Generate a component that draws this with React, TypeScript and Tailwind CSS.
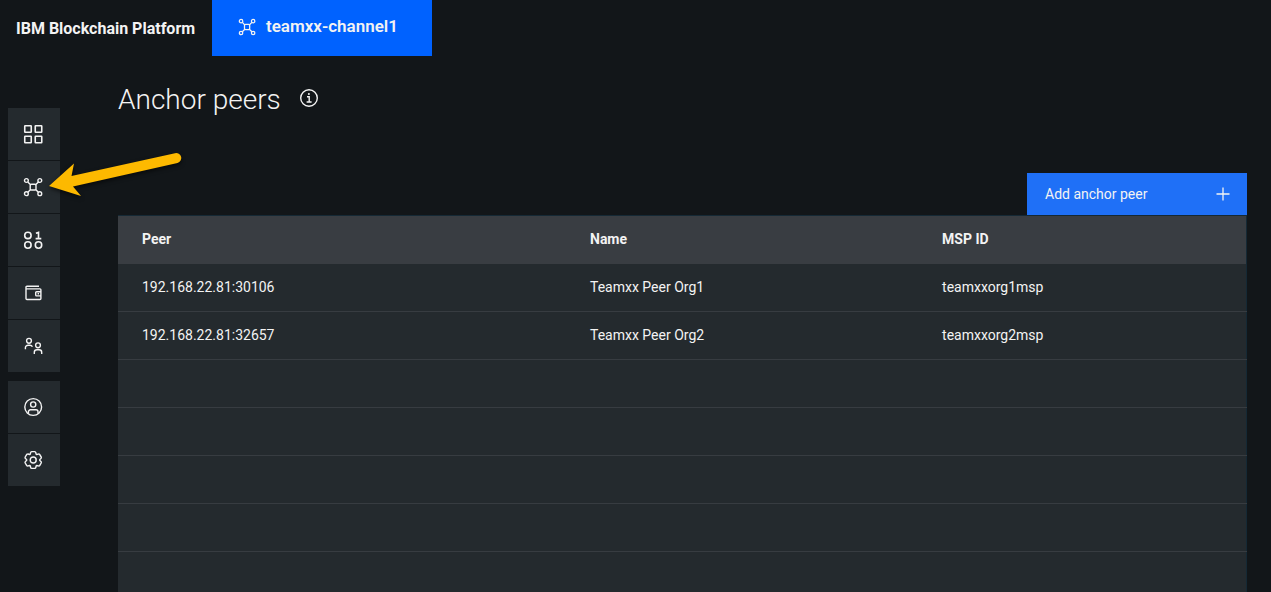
import type { ReactNode } from "react";

type IconProps = { className?: string };

function Icon({ className = "size-5", children }: IconProps & { children: ReactNode }) {
  return (
    <svg
      viewBox="0 0 20 20"
      fill="none"
      stroke="currentColor"
      strokeWidth="1.4"
      className={className}
      aria-hidden="true"
    >
      {children}
    </svg>
  );
}

function GridIcon() {
  return (
    <Icon>
      <g strokeWidth="1.6">
        <rect x="1.75" y="1.75" width="6.5" height="6.5" rx="0.4" />
        <rect x="12.25" y="1.75" width="6.5" height="6.5" rx="0.4" />
        <rect x="1.75" y="12.25" width="6.5" height="6.5" rx="0.4" />
        <rect x="12.25" y="12.25" width="6.5" height="6.5" rx="0.4" />
      </g>
    </Icon>
  );
}

function NodesIcon({ className }: IconProps) {
  return (
    <Icon className={className}>
      <circle cx="3.4" cy="3.5" r="1.9" />
      <circle cx="16.8" cy="3.5" r="1.9" />
      <circle cx="3.4" cy="16.7" r="1.9" />
      <circle cx="16.8" cy="16.7" r="1.9" />
      <rect x="7.2" y="7.2" width="5.8" height="5.8" rx="1.2" />
      <path d="M4.8 4.9 7.6 7.7M15.4 4.9 12.6 7.7M4.8 15.3 7.6 12.5M15.4 15.3 12.6 12.5" />
    </Icon>
  );
}

function BinaryIcon() {
  return (
    <Icon>
      <g strokeWidth="1.6">
        <circle cx="4.9" cy="5.4" r="3.2" />
        <circle cx="4.9" cy="15" r="3.2" />
        <circle cx="15.5" cy="15" r="3.2" />
        <path d="M12.9 3.3 15.5 2.4V8.6M12.6 8.6H18.3" />
      </g>
    </Icon>
  );
}

function WalletIcon() {
  return (
    <Icon>
      <path d="M16 3.2H3.9A.9.9 0 0 0 3 4.1V15.6a.9.9 0 0 0 .9.9H17a.9.9 0 0 0 .9-.9V6.8a.9.9 0 0 0-.9-.9H3" />
      <path d="M17.9 8.7H13.6a.9.9 0 0 0-.9.9V12a.9.9 0 0 0 .9.9H17.9" />
      <path d="M14.6 10.8H16" />
    </Icon>
  );
}

function PeopleIcon() {
  return (
    <Icon>
      <circle cx="6" cy="4.8" r="2.4" />
      <path d="M2.4 13.2V11.8A2.6 2.6 0 0 1 5 9.2H7A2.6 2.6 0 0 1 9.4 10.8" />
      <circle cx="15" cy="9.3" r="2.4" />
      <path d="M11.3 18V16.4A2.6 2.6 0 0 1 13.9 13.8H16.1A2.6 2.6 0 0 1 18.7 16.4V18" />
    </Icon>
  );
}

function UserIcon() {
  return (
    <Icon>
      <circle cx="10.2" cy="10" r="8.4" />
      <circle cx="10.2" cy="7.5" r="2.6" />
      <path d="M5.4 16.6V14.8A2 2 0 0 1 7.4 12.8H13A2 2 0 0 1 15 14.8V16.6" />
    </Icon>
  );
}

function GearIcon() {
  return (
    <Icon>
      <g transform="translate(0.6 0.4) scale(0.6)" strokeWidth="2.4">
        <path d="M27,16.76c0-.25,0-.5,0-.76s0-.51,0-.77l1.92-1.68A2,2,0,0,0,29.3,11L26.94,7a2,2,0,0,0-1.73-1,2,2,0,0,0-.64.1l-2.43.82a11.35,11.35,0,0,0-1.31-.75l-.51-2.52a2,2,0,0,0-2-1.61H13.64a2,2,0,0,0-2,1.61l-.51,2.52a11.48,11.48,0,0,0-1.32.75L7.43,6.06A2,2,0,0,0,6.79,6,2,2,0,0,0,5.06,7L2.7,11a2,2,0,0,0,.41,2.51L5,15.24c0,.25,0,.5,0,.76s0,.51,0,.77L3.11,18.45A2,2,0,0,0,2.7,21L5.06,25a2,2,0,0,0,1.73,1,2,2,0,0,0,.64-.1l2.43-.82a11.35,11.35,0,0,0,1.31.75l.51,2.52a2,2,0,0,0,2,1.61h4.72a2,2,0,0,0,2-1.61l.51-2.52a11.48,11.48,0,0,0,1.32-.75l2.42.82a2,2,0,0,0,.64.1,2,2,0,0,0,1.73-1L29.3,21a2,2,0,0,0-.41-2.51Z" />
        <circle cx="16" cy="16" r="5" />
      </g>
    </Icon>
  );
}

function InfoIcon() {
  return (
    <Icon>
      <circle cx="10" cy="10" r="8.3" />
      <path d="M8 8.8H10.2V14M7.6 14H12.6" />
      <circle cx="9.9" cy="6.1" r="1" fill="currentColor" stroke="none" />
    </Icon>
  );
}

function PointerArrow() {
  return (
    <svg
      viewBox="0 0 140 50"
      className="pointer-events-none absolute top-10 left-10 z-10 h-[50px] w-[140px] drop-shadow-[0_2px_2px_rgba(0,0,0,0.6)]"
      aria-hidden="true"
    >
      <path
        d="M1 38 26 15.500 23.500 28 127 5.200A5 5 0 0 1 129.500 14.900L25 38.600 33 48Z"
        fill="#fdb900"
      />
    </svg>
  );
}

const navGroups = [
  [
    { label: "Nodes", icon: <GridIcon /> },
    { label: "Channels", icon: <NodesIcon /> },
    { label: "Smart contracts", icon: <BinaryIcon /> },
    { label: "Wallet", icon: <WalletIcon /> },
    { label: "Organizations", icon: <PeopleIcon /> },
  ],
  [
    { label: "Account", icon: <UserIcon /> },
    { label: "Settings", icon: <GearIcon /> },
  ],
];

const peers = [
  { address: "192.168.22.81:30106", name: "Teamxx Peer Org1", msp: "teamxxorg1msp" },
  { address: "192.168.22.81:32657", name: "Teamxx Peer Org2", msp: "teamxxorg2msp" },
];

const emptyRows = [0, 1, 2, 3, 4];

export default function App() {
  return (
    <div className="flex h-screen flex-col overflow-hidden bg-[#121619] font-['Roboto','Liberation_Sans',sans-serif] text-[#f3f3f3]">
      <header className="flex h-14 shrink-0">
        <div className="flex w-[212px] items-center pt-0.5 pl-4 text-base font-bold whitespace-nowrap">
          IBM Blockchain Platform
        </div>
        <a
          href="#channel"
          className="flex w-[220px] items-center gap-2.5 bg-[#0062ff] pb-0.5 pl-[26px] text-[17px] font-semibold"
        >
          <NodesIcon className="size-[18px]" />
          teamxx-channel1
        </a>
      </header>

      <div className="flex min-h-0 flex-1">
        <nav className="relative w-[60px] shrink-0 space-y-[9px] pt-[52px] pl-2" aria-label="Main">
          {navGroups.map((group, index) => (
            <div key={index} className="flex flex-col gap-px">
              {group.map((item) => (
                <button
                  key={item.label}
                  type="button"
                  aria-label={item.label}
                  className="flex size-[52px] items-center justify-center bg-[#242a2e] pr-0.5"
                >
                  {item.icon}
                </button>
              ))}
            </div>
          ))}
          <div className="absolute top-[52px] left-2">
            <PointerArrow />
          </div>
        </nav>

        <main className="flex min-w-0 flex-1 flex-col pr-6 pl-[58px]">
          <div className="flex h-[117px] shrink-0 items-start gap-[18px] pt-6">
            <h1 className="text-[28px] leading-10 font-light">Anchor peers</h1>
            <button type="button" aria-label="About anchor peers" className="flex h-9 items-center">
              <InfoIcon />
            </button>
          </div>
          <button
            type="button"
            className="flex h-[42px] w-[220px] shrink-0 items-center justify-between self-end bg-[#1f70f7] pr-4 pl-[18px] text-sm"
          >
            Add anchor peer
            <svg viewBox="0 0 16 16" className="size-4" stroke="currentColor" strokeWidth="1.3" aria-hidden="true">
              <path d="M8 1.500V14.500M1.500 8H14.500" />
            </svg>
          </button>
          <table className="w-full table-fixed border-collapse border-t border-r border-[#152935] bg-[#242a2e] text-left text-sm">
            <thead>
              <tr className="h-12 bg-[#393d42]">
                <th className="w-[39.7%] px-6 pb-0.5 font-bold">Peer</th>
                <th className="w-[31.2%] px-6 pb-0.5 font-bold">Name</th>
                <th className="px-6 pb-0.5 font-bold">MSP ID</th>
              </tr>
            </thead>
            <tbody>
              {peers.map((peer) => (
                <tr key={peer.address} className="h-12 border-b border-[#373c41]">
                  <td className="px-6 pb-px">{peer.address}</td>
                  <td className="px-6 pb-px">{peer.name}</td>
                  <td className="px-6 pb-px">{peer.msp}</td>
                </tr>
              ))}
              {emptyRows.map((row) => (
                <tr key={row} className="h-12 border-b border-[#373c41]">
                  <td colSpan={3} />
                </tr>
              ))}
            </tbody>
          </table>
        </main>
      </div>
    </div>
  );
}
